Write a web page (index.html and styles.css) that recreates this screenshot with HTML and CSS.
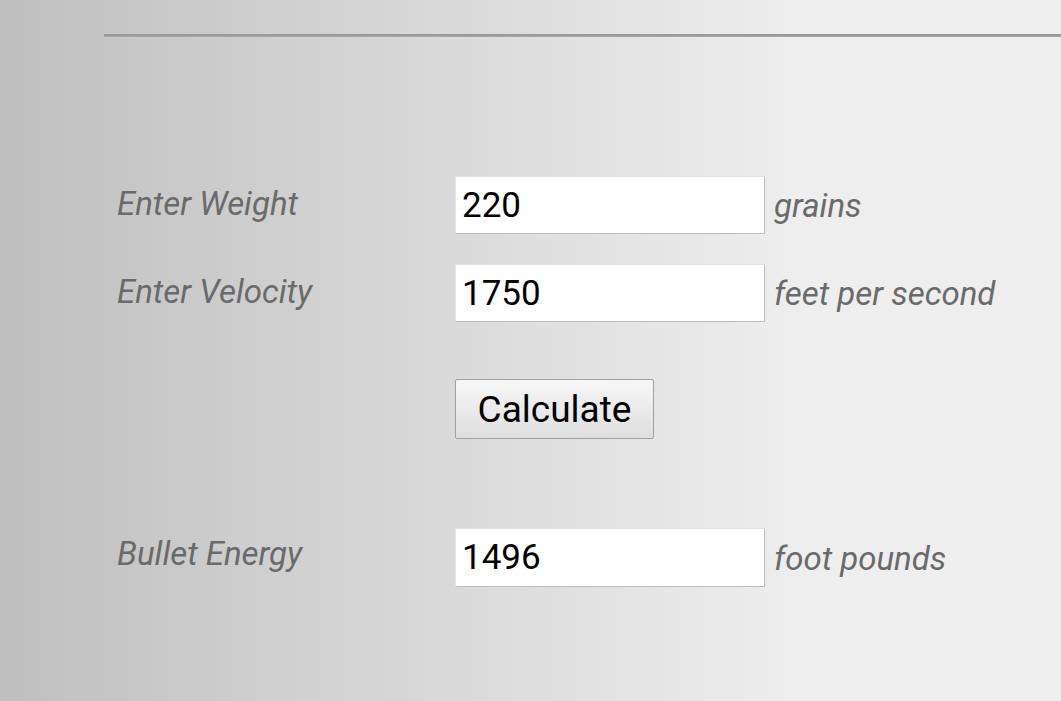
FILE: index.html
```html
<!DOCTYPE html>
<html lang="en">
    <head>
        <meta charset="UTF-8">
        <meta name="viewport" content="width=device-width, initial-scale=1.0">
        <title>Bullet Energy</title>
        <link rel="stylesheet" href="styles.css">
    </head>
    <body>
        <div class="page">
            <hr class="rule">
            <form id="formEnergia" class="calc">
                <div class="row">
                    <label class="label" for="peso">Enter Weight</label>
                    <input class="field" type="text" id="peso" value="220">
                    <span class="unit">grains</span>
                </div>
                <div class="row row-next">
                    <label class="label" for="velocidade">Enter Velocity</label>
                    <input class="field" type="text" id="velocidade" value="1750">
                    <span class="unit">feet per second</span>
                </div>
                <div class="row row-action">
                    <span class="label"></span>
                    <button type="submit" class="btn">Calculate</button>
                </div>
                <div class="row row-result">
                    <label class="label label-result" for="energia">Bullet Energy</label>
                    <input class="field field-result" type="text" id="energia" value="1496" readonly>
                    <span class="unit">foot pounds</span>
                </div>
            </form>
        </div>
        <script>
            document.getElementById("formEnergia").addEventListener("submit", function(event){
                event.preventDefault();
                let peso = Number(document.getElementById("peso").value);
                let velocidade = Number(document.getElementById("velocidade").value);
                let energia = peso * velocidade * velocidade / 450240;
                document.getElementById("energia").value = Math.round(energia);
            });
        </script>
    </body>
</html>
```

FILE: styles.css
```css
* {
    margin: 0;
    padding: 0;
    box-sizing: border-box;
}

html, body {
    min-height: 100%;
}

body {
    font-family: 'Roboto', 'Liberation Sans', sans-serif;
    background: linear-gradient(to right, #bfbfbf 0, #eeeeee 800px, #eeeeee 100%);
    color: #000;
    overflow: hidden;
}

.page {
    padding-left: 104px;
    min-height: 701px;
}

.rule {
    border: none;
    height: 3px;
    margin-top: 34px;
    background-color: #9a9a9a;
    border-bottom: 1px solid #a8a8a8;
}

.calc {
    padding-left: 13px;
}

.row {
    display: flex;
    align-items: center;
    margin-top: 139px;
}

.row-next {
    margin-top: 30px;
}

.row-action {
    margin-top: 57px;
}

.row-result {
    margin-top: 89px;
}

.label {
    width: 338px;
    flex-shrink: 0;
    font-size: 33px;
    font-style: italic;
    color: #6a6a6a;
    margin-bottom: 4px;
}

.label-result {
    margin-bottom: 8px;
}

.field {
    width: 310px;
    height: 58px;
    padding: 0 6px;
    border: 1px solid;
    border-color: #e2e2e2 #bdbdbd #bdbdbd #e6e6e6;
    background-color: #ffffff;
    font-family: 'Roboto', 'Liberation Sans', sans-serif;
    font-size: 35px;
    color: #000;
    outline: none;
}

.field-result {
    height: 59px;
}

.unit {
    margin-left: 9px;
    font-size: 33px;
    font-style: italic;
    color: #6a6a6a;
    margin-top: 1px;
}

.btn {
    width: 199px;
    height: 60px;
    border: 1px solid #a0a0a0;
    border-radius: 2px;
    background: linear-gradient(#f7f7f7, #dedede);
    font-family: 'Roboto', 'Liberation Sans', sans-serif;
    font-size: 37px;
    color: #000;
    cursor: pointer;
}
```
